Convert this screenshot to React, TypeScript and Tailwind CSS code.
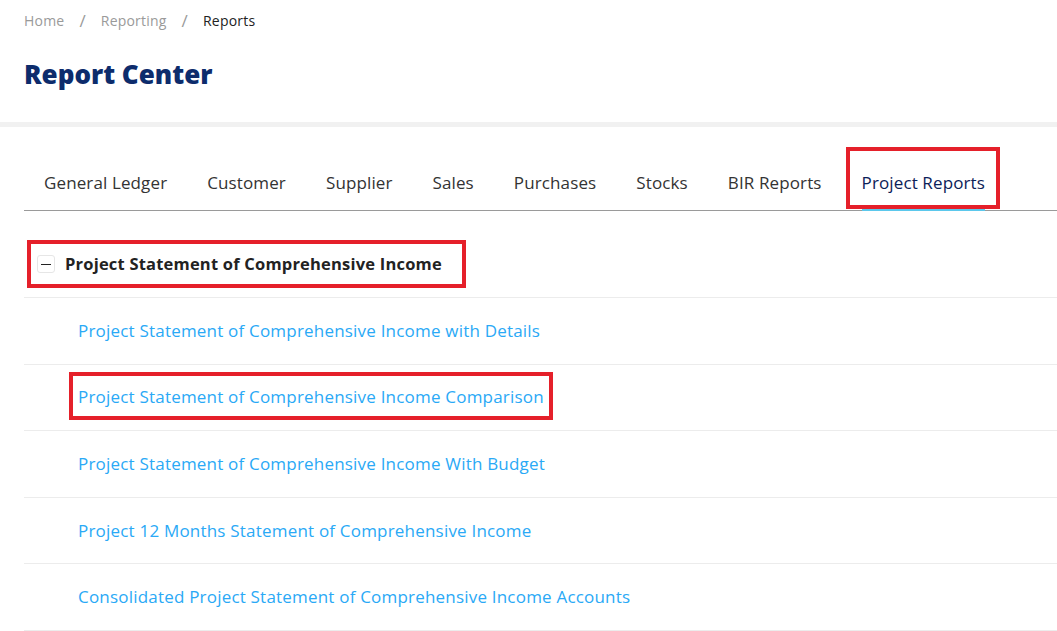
import { useState } from "react"

const tabs = [
  "General Ledger",
  "Customer",
  "Supplier",
  "Sales",
  "Purchases",
  "Stocks",
  "BIR Reports",
  "Project Reports",
]

const reports = [
  "Project Statement of Comprehensive Income with Details",
  "Project Statement of Comprehensive Income Comparison",
  "Project Statement of Comprehensive Income With Budget",
  "Project 12 Months Statement of Comprehensive Income",
  "Consolidated Project Statement of Comprehensive Income Accounts",
]

export default function App() {
  const [active, setActive] = useState("Project Reports")
  const [open, setOpen] = useState(true)

  return (
    <div className="min-h-screen bg-white font-['Open_Sans',sans-serif] text-[#333]">
      <header className="h-[127px] border-b-[5px] border-[#f1f1f1] px-6">
        <nav className="flex items-center pt-[10px] text-[14px] leading-[22px] tracking-[0.2px]">
          <span className="text-[#9a9a9a]">Home</span>
          <span className="px-[15px] text-[17px] text-[#9a9a9a]">/</span>
          <span className="text-[#9a9a9a]">Reporting</span>
          <span className="px-[15px] text-[17px] text-[#9a9a9a]">/</span>
          <span className="text-[#222]">Reports</span>
        </nav>
        <h1 className="mt-[26px] text-[26px] leading-[32px] font-extrabold text-[#0d2c6c]">
          Report Center
        </h1>
      </header>

      <div className="mt-5 ml-6 flex border-b border-[#9a9a9a]">
        {tabs.map((t) => {
          const isActive = t === active
          return (
            <button
              key={t}
              type="button"
              onClick={() => setActive(t)}
              className={
                isActive
                  ? "relative px-5 pt-6 pb-[15px] text-[17px] leading-6 tracking-[0.12px] font-medium text-[#0b2158]"
                  : "relative px-5 pt-6 pb-[15px] text-[17px] leading-6 tracking-[0.12px] text-[#333]"
              }
            >
              {t}
              {isActive && (
                <>
                  <span className="absolute right-5 -bottom-px left-5 h-[3px] bg-[#5bc8ec]" />
                  <span className="absolute top-0 right-[5px] bottom-px left-[4px] border-4 border-[#e5202a]" />
                </>
              )}
            </button>
          )
        })}
      </div>

      <div className="ml-6">
        <div className="border-b border-[#ececec] pt-[29px] pb-[9px]">
          <button
            type="button"
            onClick={() => setOpen(!open)}
            className="relative flex h-12 items-center gap-[10px] pl-[13px]"
          >
            <span className="flex size-[18px] items-center justify-center rounded-[3px] border border-[#e6e6e6]">
              <span className="h-px w-[10px] bg-[#222]" />
            </span>
            <span className="text-[16.5px] leading-6 tracking-[0.2px] font-bold text-[#222]">
              Project Statement of Comprehensive Income
            </span>
            <span className="absolute top-0 -right-[24px] bottom-0 left-[3px] border-4 border-[#e5202a]" />
          </button>
        </div>

        {open &&
          reports.map((r, i) => (
            <div key={r} className="flex h-[66.6px] items-center border-b border-[#ececec] pl-[54px]">
              <a href="#" className="relative text-[17px] leading-6 tracking-[0.2px] text-[#2aa9f6]">
                {r}
                {i === 1 && (
                  <span className="absolute -inset-x-[9px] -top-[13px] -bottom-[11px] border-4 border-[#e5202a]" />
                )}
              </a>
            </div>
          ))}
      </div>
    </div>
  )
}
